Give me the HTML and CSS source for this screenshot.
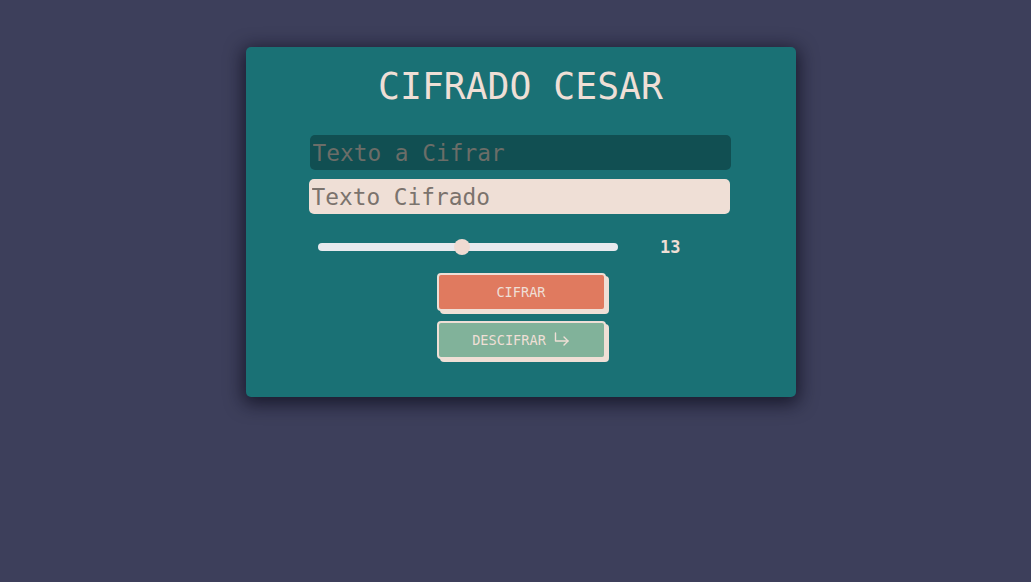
FILE: index.html
```html
<!DOCTYPE html>
<html lang="es">
<head>
<meta charset="utf-8">
<title>Cifrado Cesar</title>
<link rel="stylesheet" href="styles.css">
</head>
<body>
<main class="card">
  <h1 class="title">CIFRADO CESAR</h1>
  <input class="field field-dark" type="text" placeholder="Texto a Cifrar">
  <input class="field field-light" type="text" placeholder="Texto Cifrado">
  <div class="slider-row">
    <input class="slider" type="range" min="1" max="26" value="13">
    <span class="shift">13</span>
  </div>
  <div class="actions">
    <button class="btn btn-encrypt">CIFRAR</button>
    <button class="btn btn-decrypt">DESCIFRAR <svg class="arrow" width="16" height="14" viewBox="0 0 16 14" fill="none" stroke="#efdfd6" stroke-width="1.4" stroke-linecap="round" stroke-linejoin="round"><path d="M1.5 1v8h12.5"/><path d="M10 5l4 4-4 4"/></svg></button>
  </div>
</main>
</body>
</html>
```

FILE: styles.css
```css
html, body {
  margin: 0;
  padding: 0;
}
body {
  background: #3d3f5b;
  min-height: 582px;
  padding-left: 10px;
  box-sizing: border-box;
  font-family: "DejaVu Sans Mono", monospace;
}
.card {
  width: 550px;
  height: 350px;
  box-sizing: border-box;
  margin: 47px auto 0;
  padding-top: 19px;
  background: #1a7175;
  border-radius: 5px;
  box-shadow: 0 4px 18px 3px rgba(10, 10, 25, 0.7);
  display: flex;
  flex-direction: column;
  align-items: center;
}
.title {
  margin: 0;
  font-size: 36.4px;
  line-height: 42px;
  font-weight: normal;
  color: #efdfd6;
}
.field {
  width: 421px;
  height: 35px;
  box-sizing: border-box;
  border: none;
  outline: none;
  border-radius: 5px;
  padding: 0 2px 0 3px;
  font-family: "DejaVu Sans Mono", monospace;
  font-size: 22.8px;
}
.field-dark {
  margin-top: 27px;
  margin-left: -1px;
  background: #114f52;
  color: #e0e0e0;
}
.field-dark::placeholder {
  color: #6b6d68;
}
.field-light {
  margin-top: 9px;
  margin-left: -3px;
  background: #efdfd6;
  color: #444;
}
.field-light::placeholder {
  color: #7b736d;
}
.slider-row {
  margin-top: 21px;
  width: 421px;
  height: 24px;
  display: flex;
  align-items: center;
  padding-left: 8px;
  box-sizing: border-box;
}
.slider {
  -webkit-appearance: none;
  appearance: none;
  width: 300px;
  height: 8px;
  margin: 0;
  background: #e8eaee;
  border-radius: 4px;
  outline: none;
}
.slider::-webkit-slider-thumb {
  -webkit-appearance: none;
  appearance: none;
  width: 16px;
  height: 16px;
  border-radius: 50%;
  background: #efdbd2;
  border: none;
}
.shift {
  margin-left: 42px;
  font-size: 17px;
  font-weight: bold;
  color: #efdfd6;
}
.actions {
  margin-top: 14px;
  display: flex;
  flex-direction: column;
  gap: 10px;
  padding-left: 1px;
}
.btn {
  width: 169px;
  height: 38px;
  box-sizing: border-box;
  border: 2px solid #efdfd6;
  border-radius: 4px;
  box-shadow: 3px 3px 0 #efdfd6;
  font-family: "DejaVu Sans Mono", monospace;
  font-size: 13.6px;
  color: #efdfd6;
  cursor: pointer;
  padding: 0;
  display: flex;
  align-items: center;
  justify-content: center;
}
.btn-encrypt {
  background: #e07a5f;
}
.btn-decrypt {
  background: #81b29a;
}
.arrow {
  margin-left: 8px;
  margin-bottom: 2px;
}
```
